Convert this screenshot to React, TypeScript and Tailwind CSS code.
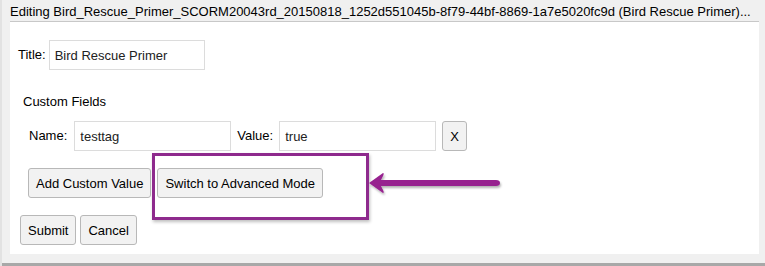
import React from "react";

const btn =
  "h-[30px] px-[7px] rounded-[3px] border border-[#b8b8b8] bg-[#f2f2f2] text-[13px] text-black leading-none";
const field =
  "h-[30px] border border-[#dcdcdc] bg-white px-[5px] text-[13px] text-[#222] outline-none";

export default function App() {
  return (
    <div
      className="relative w-[765px] h-[266px] bg-[#f0f0f0] flex flex-col overflow-hidden border-l-[2px] border-[#e2e2e2]"
      style={{ fontFamily: '"Liberation Sans", Arial, sans-serif' }}
    >
      <div className="h-[21px] pl-[8px] pt-[2px] text-[13px] text-black whitespace-nowrap overflow-hidden">
        Editing Bird_Rescue_Primer_SCORM20043rd_20150818_1252d551045b-8f79-44bf-8869-1a7e5020fc9d (Bird Rescue Primer)...
      </div>
      <div className="ml-[8px] mr-[6px] h-[233px] bg-white border-t border-[#c8c8c8] pt-[18px] pl-[8px]">
        <div className="flex items-center gap-[3px] text-[13px]">
          <span>Title:</span>
          <input className={`${field} w-[156px]`} defaultValue="Bird Rescue Primer" />
        </div>

        <div className="mt-[24px] ml-[5px] text-[13px] leading-[15px]">Custom Fields</div>

        <div className="mt-[12px] ml-[11px] flex items-center text-[13px]">
          <span className="mr-[7px]">Name:</span>
          <input className={`${field} w-[157px]`} defaultValue="testtag" />
          <span className="ml-[6px] mr-[6px]">Value:</span>
          <input className={`${field} w-[157px]`} defaultValue="true" />
          <button className={`${btn} ml-[6px] w-[25px] px-0`}>X</button>
        </div>

        <div className="mt-[17px] ml-[10px] flex gap-[6px]">
          <button className={btn}>Add Custom Value</button>
          <button className={btn}>Switch to Advanced Mode</button>
        </div>

        <div className="mt-[17px] ml-[2px] flex gap-[4px]">
          <button className={btn}>Submit</button>
          <button className={btn}>Cancel</button>
        </div>
      </div>
      <div className="flex-1" />
      <div className="h-[3px] bg-[#a8a8a8]" />

      {/* annotation overlay */}
      <div className="absolute left-[150px] top-[153px] w-[217px] h-[67px] border-[3px] border-[#8e2a8d] shadow-[1px_2px_3px_rgba(0,0,0,0.25)]" />
      <svg
        className="absolute left-[364px] top-[170px]"
        width="140"
        height="30"
        viewBox="0 0 140 30"
      >
        <defs>
          <filter id="sh" x="-10%" y="-30%" width="120%" height="170%">
            <feDropShadow dx="1" dy="2" stdDeviation="1.2" floodColor="#000" floodOpacity="0.3" />
          </filter>
        </defs>
        <g filter="url(#sh)" fill="#97238f">
          <path d="M3 13 L17 3 Q18 2.5 17.5 5 L15 10 L130 10 Q134 10 134 13 Q134 16 130 16 L15 16 L17.5 21 Q18 23.5 17 23 Z" />
        </g>
      </svg>
    </div>
  );
}
